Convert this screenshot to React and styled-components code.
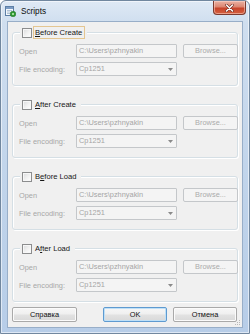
import React from 'react';
import styled, { createGlobalStyle } from 'styled-components';

const Global = createGlobalStyle`
  html, body { margin: 0; padding: 0; background: #ffffff; }
  body { font-family: "Liberation Sans", Arial, sans-serif; }
  * { box-sizing: border-box; }
`;

const Window = styled.div`
  width: 250px;
  height: 334px;
  border: 1px solid #71879f;
  border-radius: 6px 6px 0 0;
  background: linear-gradient(180deg, #dfe9f5 0px, #cfdeef 22px, #bfd3ea 60%, #b7cde8 100%);
  box-shadow: inset 0 0 0 1px rgba(255, 255, 255, 0.55);
  display: flex;
  flex-direction: column;
  padding: 0 6px 5px 6px;
  overflow: hidden;
`;

const TitleBar = styled.div`
  height: 21px;
  margin: 0 -6px;
  padding-left: 4px;
  display: flex;
  align-items: flex-start;
`;

const TitleIcon = styled.svg`
  width: 11px;
  height: 11px;
  margin-top: 5px;
  flex: none;
`;

const TitleText = styled.span`
  margin-left: 5px;
  margin-top: 5px;
  font-size: 8.2px;
  line-height: 11px;
  color: #0b0b0b;
`;

const CloseButton = styled.div`
  margin-left: auto;
  margin-right: 3px;
  width: 33px;
  height: 14px;
  border: 1px solid #7b3a2f;
  border-top: none;
  border-radius: 0 0 4px 4px;
  background: linear-gradient(180deg, #eab2a4 0%, #dc8671 45%, #c7442b 55%, #d4603f 100%);
  box-shadow: inset 0 0 0 1px rgba(255, 220, 210, 0.5);
  display: flex;
  align-items: center;
  justify-content: center;
`;

const Content = styled.div`
  flex: 1;
  position: relative;
  background: #f0f0f0;
  border: 1px solid #98aec8;
  padding: 10px 4px 5px 4px;
  display: flex;
  flex-direction: column;
  gap: 18px;
`;

const Group = styled.div`
  height: 54px;
  border: 1px solid #d5dfe5;
  border-radius: 3px;
  box-shadow: inset 1px 1px 0 #ffffff, 1px 1px 0 #ffffff;
  display: flex;
  flex-direction: column;
  padding: 0 5px 0 6px;
`;

const Legend = styled.div`
  align-self: flex-start;
  margin: -7px 0 0 1px;
  padding: 0 2px;
  height: 13px;
  background: #f0f0f0;
  display: flex;
  align-items: center;
  gap: 1px;
`;

const Check = styled.span`
  width: 10px;
  height: 10px;
  border: 1px solid #8c8d8e;
  background: linear-gradient(135deg, #d9dadb 0%, #f2f2f2 55%, #ffffff 100%);
  box-shadow: inset 0 0 0 1px #f7f7f7;
  flex: none;
`;

const LegendLabel = styled.span`
  font-size: 7.6px;
  line-height: 11px;
  color: #161616;
  padding: 0 2px 0 1px;
  border: 1px solid ${p => (p.$focused ? '#e4c691' : 'transparent')};
`;

const Fields = styled.div`
  margin-top: 5px;
  display: grid;
  grid-template-columns: 51px 101px 55px;
  grid-auto-rows: 14px;
  column-gap: 6px;
  row-gap: 4px;
  align-items: center;
`;

const FieldLabel = styled.span`
  font-size: 7.4px;
  color: #a7a7a7;
  white-space: nowrap;
`;

const Field = styled.div`
  height: 14px;
  border: 1px solid #c4c7ca;
  border-radius: 1px;
  background: #f4f4f4;
  color: #a5a5a5;
  font-size: 7.4px;
  line-height: 12px;
  padding-left: 2px;
  position: relative;
  white-space: nowrap;
  overflow: hidden;
`;

const Arrow = styled.svg`
  position: absolute;
  right: 3px;
  top: 5px;
  width: 5px;
  height: 3px;
`;

const DisabledButton = styled.div`
  height: 14px;
  border: 1px solid #c4c7ca;
  border-radius: 2px;
  background: #f4f4f4;
  color: #ababab;
  font-size: 7.4px;
  line-height: 12px;
  text-align: center;
`;

const Footer = styled.div`
  margin-top: -13px;
  display: flex;
  gap: 6px;
`;

const Button = styled.div`
  width: ${p => p.$w}px;
  height: 15px;
  margin-left: ${p => (p.$push ? 'auto' : '0')};
  margin-right: ${p => (p.$last ? '1px' : '0')};
  border: 1px solid ${p => (p.$default ? '#5e9ad0' : '#a9a9a9')};
  border-radius: 2px;
  background: linear-gradient(180deg, #f7f7f7 0%, #efefef 48%, #e2e2e2 52%, #d9d9d9 100%);
  box-shadow: inset 0 0 0 1px ${p => (p.$default ? '#bfe0f7' : '#fbfbfb')};
  color: #111;
  font-size: 7.4px;
  line-height: 13px;
  text-align: center;
  &:first-child { margin-left: 0; }
`;

const Grip = styled.svg`
  position: absolute;
  right: 1px;
  bottom: 1px;
  width: 8px;
  height: 8px;
`;

const groups = [
  { pre: '', key: 'B', post: 'efore Create', focused: true },
  { pre: '', key: 'A', post: 'fter Create' },
  { pre: 'B', key: 'e', post: 'fore Load' },
  { pre: 'A', key: 'f', post: 'ter Load' },
];

function ScriptGroup({ g }) {
  return (
    <Group>
      <Legend>
        <Check />
        <LegendLabel $focused={g.focused}>
          {g.pre}<u>{g.key}</u>{g.post}
        </LegendLabel>
      </Legend>
      <Fields>
        <FieldLabel>Open</FieldLabel>
        <Field>C:\Users\pzhnyakin</Field>
        <DisabledButton>Browse...</DisabledButton>
        <FieldLabel>File encoding:</FieldLabel>
        <Field>
          Cp1251
          <Arrow viewBox="0 0 5 3"><path d="M0 0h5L2.5 3z" fill="#8a8a8a" /></Arrow>
        </Field>
      </Fields>
    </Group>
  );
}

export default function App() {
  return (
    <>
      <Global />
      <Window>
        <TitleBar>
          <TitleIcon viewBox="0 0 11 11">
            <rect x="0.5" y="0.5" width="8" height="9" fill="#f4f8fc" stroke="#5d7fa6" />
            <rect x="1" y="1" width="7" height="2" fill="#7c9cc4" />
            <path d="M2 4.5h5M2 6h3M2 7.5h3" stroke="#9fb4cc" strokeWidth="0.8" />
            <circle cx="8" cy="8" r="2.8" fill="#2f9a32" stroke="#1f6d22" strokeWidth="0.5" />
            <circle cx="8" cy="8" r="1" fill="#c9f0c0" />
          </TitleIcon>
          <TitleText>Scripts</TitleText>
          <CloseButton>
            <svg width="9" height="8" viewBox="0 0 9 8">
              <path d="M1.5 1l6 6M7.5 1l-6 6" stroke="#6b2a20" strokeWidth="2.6" strokeLinecap="round" />
              <path d="M1.5 1l6 6M7.5 1l-6 6" stroke="#ffffff" strokeWidth="1.5" strokeLinecap="round" />
            </svg>
          </CloseButton>
        </TitleBar>
        <Content>
          {groups.map((g, i) => (
            <ScriptGroup key={i} g={g} />
          ))}
          <Footer>
            <Button $w={65}>Справка</Button>
            <Button $w={64} $push $default>OK</Button>
            <Button $w={64} $last>Отмена</Button>
          </Footer>
          <Grip viewBox="0 0 8 8">
            <g fill="#b9b9b9">
              <rect x="6" y="2" width="1" height="1" />
              <rect x="4" y="4" width="1" height="1" />
              <rect x="6" y="4" width="1" height="1" />
              <rect x="2" y="6" width="1" height="1" />
              <rect x="4" y="6" width="1" height="1" />
              <rect x="6" y="6" width="1" height="1" />
            </g>
          </Grip>
        </Content>
      </Window>
    </>
  );
}
